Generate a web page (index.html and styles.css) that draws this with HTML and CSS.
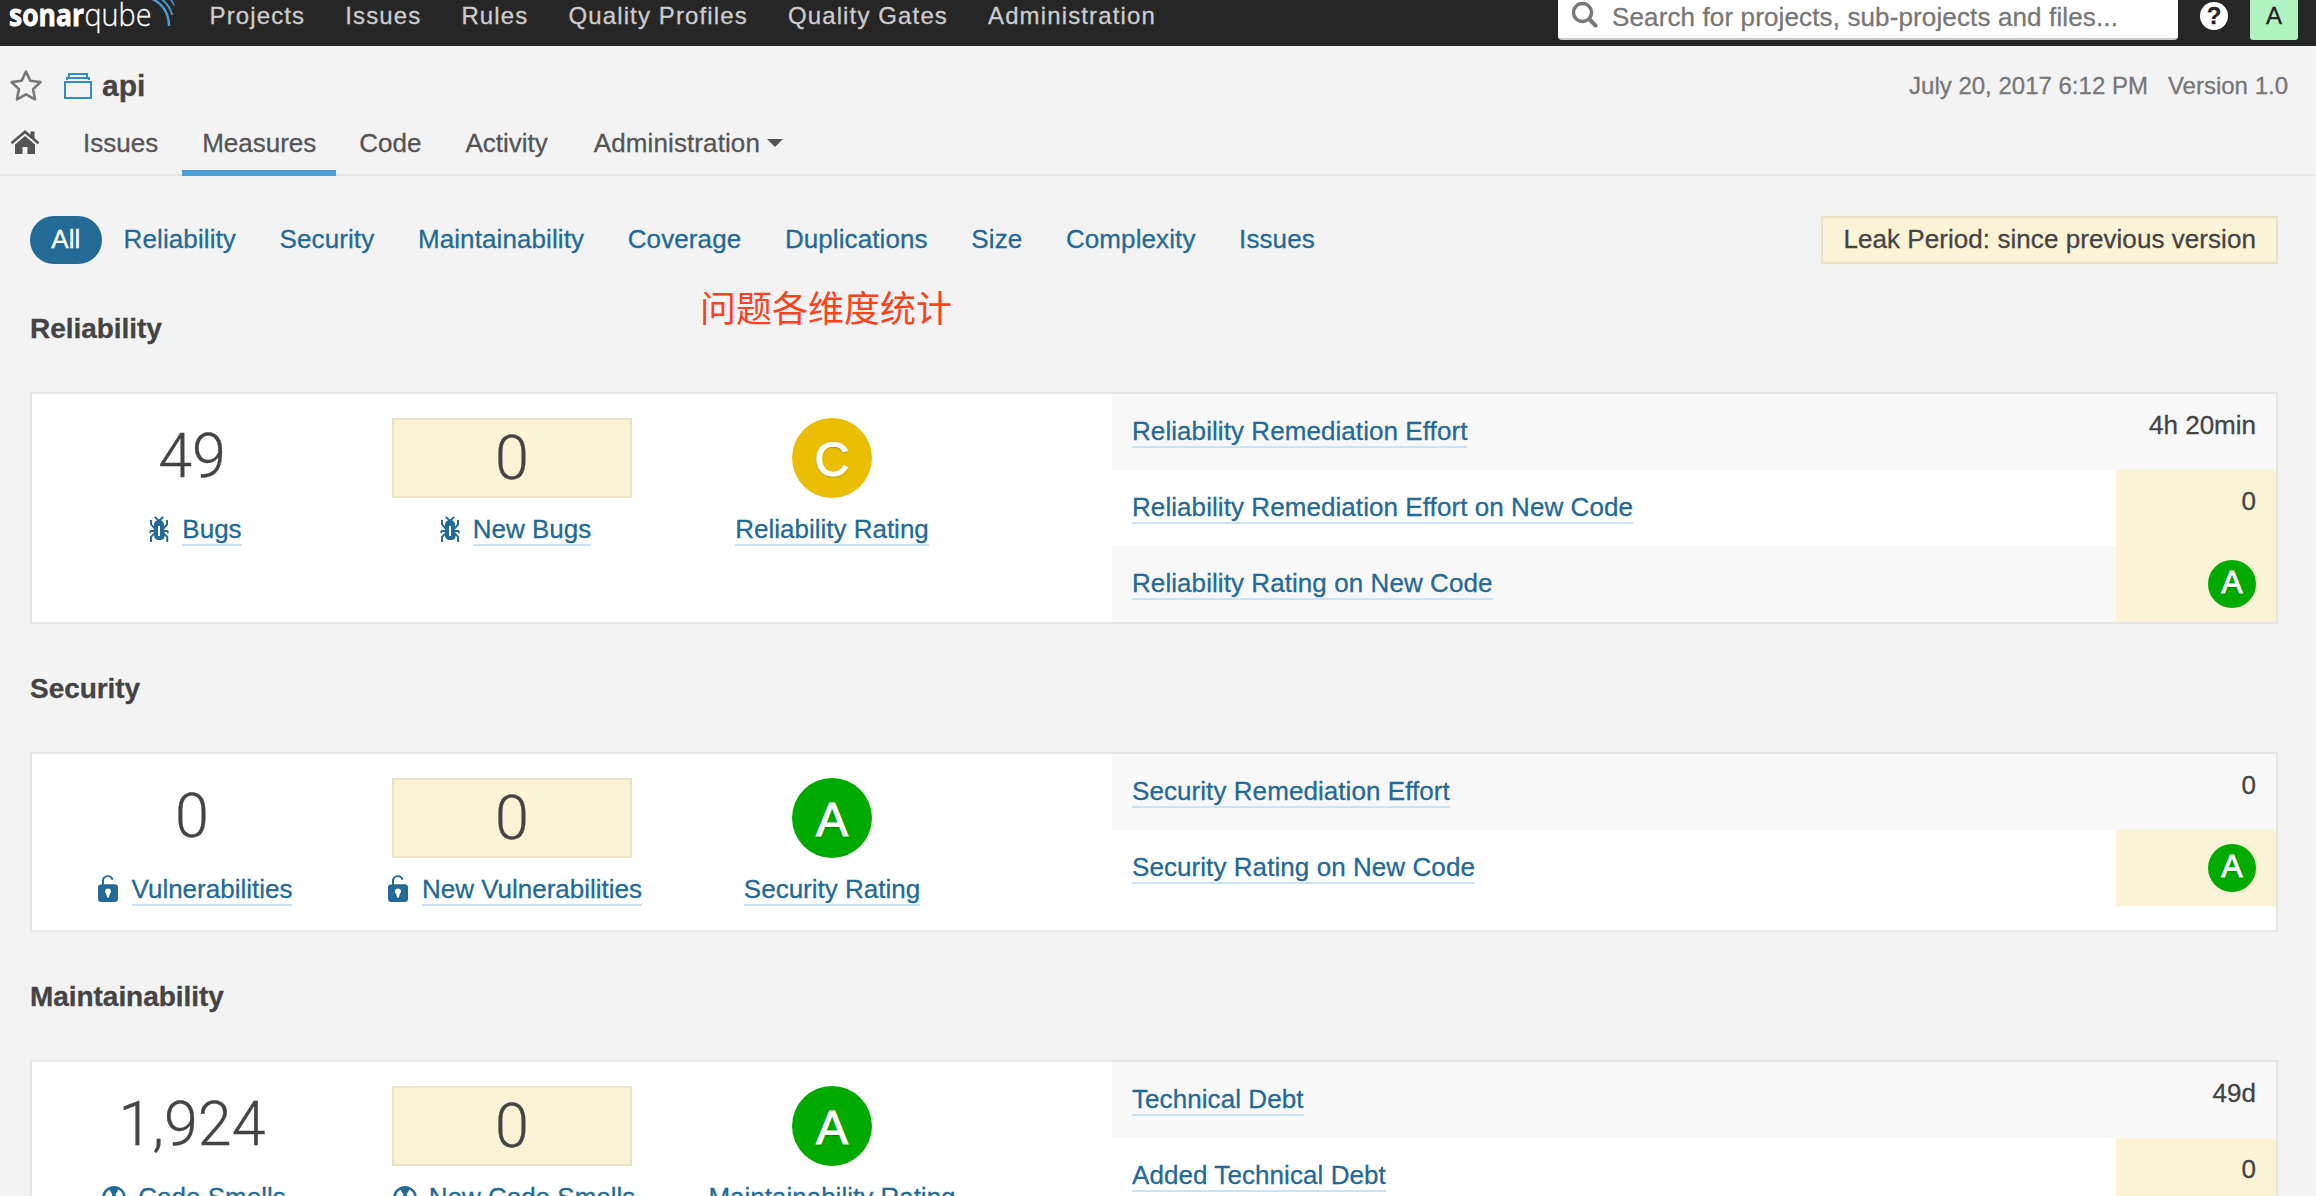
FILE: index.html
```html
<!DOCTYPE html>
<html lang="en">
<head>
<meta charset="utf-8">
<title>api - Measures</title>
<link rel="stylesheet" href="styles.css">
</head>
<body>
<svg class="sprite" width="0" height="0" aria-hidden="true">
  <symbol id="icon-bug" viewBox="0 0 16 16"><path d="M11 9h1.3l.5.8.8-.5-.8-1.3H11v-.3l2-2.3V3h-1v2l-1 1.2V5c-.1-.8-.7-1.5-1.4-1.9L11 1.8l-.7-.7-1.8 1.6-1.8-1.6-.7.7 1.5 1.3C6.7 3.5 6.1 4.2 6 5v1.1L5 5V3H4v2.3l2 2.3V8H4.2l-.7 1.2.8.5.4-.7H6v.3l-2 1.9V14h1v-2.4l1-1C6 12 7.1 13 8.4 13h.8c.7 0 1.4-.3 1.8-.9.3-.4.3-.9.2-1.4l.9.9V14h1v-2.8l-2-1.9V9zm-2 2H8V6h1v5z"/></symbol>
  <symbol id="icon-lock" viewBox="0 0 16 16"><path fill-rule="evenodd" d="M5 5.3V3.4C5 1.8 6.3.6 7.9.6c1.5 0 2.6.9 2.8 2.2l-.9.2c-.2-.9-.9-1.5-1.9-1.5-1.1 0-1.9.8-1.9 1.9v1.700h5.500c.8 0 1.500.6 1.500 1.400v6c0 .9-.7 1.500-1.500 1.500h-7C3.700 14 3 13.400 3 12.500v-6c0-.7.500-1.200 1.200-1.300zM8 7.200c-.9 0-1.500.7-1.500 1.500 0 .5.3.9.6 1.200l.4 1.900h1l.4-1.900c.4-.3.6-.7.6-1.200 0-.8-.6-1.500-1.500-1.500z"/></symbol>
  <symbol id="icon-smell" viewBox="0 0 16 16"><path fill-rule="evenodd" d="M8 2C4.700 2 2 4.700 2 8s2.700 6 6 6 6-2.700 6-6-2.700-6-6-6zm-.5 5.500h1v1h-1zM3.700 7.700c-.1 0-.2-.1-.2-.2 0-1.500.8-2.800 2.100-3.500.2 0 .3 0 .3.100l1.300 2.300c0 .1 0 .2-.1.200-.3.200-.5.600-.5 1 0 .1-.1.200-.2.200zm8.600 0H9.600c-.1 0-.2-.1-.2-.2 0-.4-.2-.8-.5-1-.1 0-.1-.1-.1-.2l1.300-2.300c0-.1.100-.1.300-.1 1.300.7 2.100 2 2.100 3.500 0 .2-.1.300-.2.300zM6 12.100c-.1 0-.1-.2 0-.3l1.300-2.300c.1-.1.100-.1.200-.1.300.2.700.2 1 0 .1 0 .2 0 .2.100l1.300 2.300c.1.100 0 .2 0 .3-1.200.6-2.800.6-4 0z"/></symbol>
</svg>

<header class="navbar">
  <svg class="logo" width="180" height="46" viewBox="0 0 180 46">
    <text class="logo-bold" x="9" y="26" textLength="75" lengthAdjust="spacingAndGlyphs">sonar</text>
    <text class="logo-light" x="84.500" y="26" textLength="67" lengthAdjust="spacingAndGlyphs">qube</text>
    <g fill="none" stroke="#4b9fd5"><path stroke-width="2.400" d="M150-2C161 2 169 12 169 26"/><path stroke-width="1.900" d="M160-2c6 4 10 9 12.300 17"/><path stroke-width="1.500" d="M167-4c3 2 5.500 5 7 9.500"/></g>
  </svg>
  <nav class="global-nav">
    <a>Projects</a><a>Issues</a><a>Rules</a><a>Quality Profiles</a><a>Quality Gates</a><a>Administration</a>
  </nav>
  <div class="search">
    <svg width="28" height="28" viewBox="0 0 28 28"><g fill="none" stroke="#777" stroke-width="3.400"><circle cx="10.500" cy="12.500" r="9"/><path stroke-width="4" stroke-linecap="round" d="M17.500 19.500l6 6"/></g></svg>
    <span>Search for projects, sub-projects and files...</span>
  </div>
  <div class="help"><span>?</span></div>
  <div class="avatar">A</div>
</header>

<header class="context">
  <div class="project">
    <svg width="32" height="32" viewBox="0 0 32 32"><path fill="none" stroke="#777" stroke-width="2.600" stroke-linejoin="round" d="M16 1.500l4.300 9.300 10.200 1.300-7.400 7 1.900 10.200-9-4.900-9 4.900 1.900-10.200-7.400-7 10.200-1.300z"/></svg>
    <svg class="stack" width="28" height="28" viewBox="0 0 28 28"><path fill="none" stroke="#2d8dc9" stroke-width="2" d="M1 9h26v16H1zM3 7V5h22v2M5 4V1h18v3"/></svg>
    <h1>api</h1>
    <div class="meta"><span>July 20, 2017 6:12 PM</span><span>Version 1.0</span></div>
  </div>
  <nav class="tabs">
    <a class="home"><svg width="30" height="26" viewBox="0 0 30 26"><path fill="#555" d="M15 6l10 8.500V24h-7.500v-7h-5v7H5v-9.500zM15 0l5.500 4.700V1.500h4V8l4.800 4.200-1.600 2L15 3.500 2.300 14.200l-1.600-2z"/></svg></a>
    <a>Issues</a><a class="active">Measures</a><a class="code">Code</a><a>Activity</a><a class="admin">Administration<i class="caret"></i></a>
  </nav>
</header>

<main>
  <div class="domains">
    <nav class="pills"><a class="active">All</a><a>Reliability</a><a>Security</a><a>Maintainability</a><a>Coverage</a><a>Duplications</a><a>Size</a><a>Complexity</a><a>Issues</a></nav>
    <div class="leak-period">Leak Period: since previous version</div>
  </div>
  <div class="note" lang="zh">问题各维度统计</div>

  <section>
    <h2>Reliability</h2>
    <div class="card">
      <div class="main-measures">
        <div class="measure"><div class="value">49</div><div class="label"><svg><use href="#icon-bug"/></svg><a>Bugs</a></div></div>
        <div class="measure"><div class="value leak">0</div><div class="label"><svg><use href="#icon-bug"/></svg><a>New Bugs</a></div></div>
        <div class="measure"><div class="rating rating-c">C</div><div class="label"><a>Reliability Rating</a></div></div>
      </div>
      <div class="rows">
        <div class="row"><a>Reliability Remediation Effort</a><div class="cell">4h 20min</div></div>
        <div class="row"><a>Reliability Remediation Effort on New Code</a><div class="cell leak-cell">0</div></div>
        <div class="row"><a>Reliability Rating on New Code</a><div class="cell leak-cell"><span class="rating small">A</span></div></div>
      </div>
    </div>
  </section>

  <section>
    <h2>Security</h2>
    <div class="card">
      <div class="main-measures">
        <div class="measure"><div class="value">0</div><div class="label"><svg><use href="#icon-lock"/></svg><a>Vulnerabilities</a></div></div>
        <div class="measure"><div class="value leak">0</div><div class="label"><svg><use href="#icon-lock"/></svg><a>New Vulnerabilities</a></div></div>
        <div class="measure"><div class="rating">A</div><div class="label"><a>Security Rating</a></div></div>
      </div>
      <div class="rows">
        <div class="row"><a>Security Remediation Effort</a><div class="cell">0</div></div>
        <div class="row"><a>Security Rating on New Code</a><div class="cell leak-cell"><span class="rating small">A</span></div></div>
      </div>
    </div>
  </section>

  <section>
    <h2>Maintainability</h2>
    <div class="card">
      <div class="main-measures">
        <div class="measure"><div class="value">1,924</div><div class="label"><svg><use href="#icon-smell"/></svg><a>Code Smells</a></div></div>
        <div class="measure"><div class="value leak">0</div><div class="label"><svg><use href="#icon-smell"/></svg><a>New Code Smells</a></div></div>
        <div class="measure"><div class="rating">A</div><div class="label"><a>Maintainability Rating</a></div></div>
      </div>
      <div class="rows">
        <div class="row"><a>Technical Debt</a><div class="cell">49d</div></div>
        <div class="row"><a>Added Technical Debt</a><div class="cell leak-cell">0</div></div>
      </div>
    </div>
  </section>
</main>
</body>
</html>
```
FILE: styles.css
```css
* { box-sizing: border-box; }
html, body { height: 100%; overflow: hidden; }
body {
  margin: 0;
  background: #f3f3f3;
  color: #444;
  font: 26px/30px "Liberation Sans", Arial, sans-serif;
  white-space: nowrap;
  -webkit-text-stroke-width: .3px;
}
h1, h2 { margin: 0; }
svg { display: block; flex: none; }
.sprite { position: absolute; }

.navbar {
  display: flex;
  align-items: flex-start;
  height: 46px;
  padding-right: 18px;
  background: #262626;
  color: #ccc;
  font-size: 24px;
  line-height: 32px;
}
.logo { -webkit-text-stroke-width: 0; }
.logo-bold { font: 700 31px "Open Sans", sans-serif; fill: #fff; stroke: #fff; stroke-width: .8px; }
.logo-light { font: 300 31px "Open Sans", sans-serif; fill: #fff; stroke: #fff; stroke-width: .3px; }
.global-nav {
  display: flex;
  gap: 40px;
  margin-left: 29.5px;
  letter-spacing: 1.13px;
}
.search {
  display: flex;
  align-items: flex-start;
  width: 620px;
  height: 40px;
  margin-left: auto;
  padding-left: 14px;
  background: #fff;
  border-bottom: 2px solid #ccc;
  border-radius: 0 0 4px 4px;
  color: #777;
  font-size: 26px;
  line-height: 34px;
  letter-spacing: .13px;
}
.search span { margin-left: 12px; }
.help {
  width: 28px;
  height: 28px;
  margin: 2px 22px 0;
  border-radius: 50%;
  background: #fff;
  color: #262626;
  font-weight: 700;
  line-height: 28px;
  text-align: center;
}
.avatar {
  width: 48px;
  height: 40px;
  border-radius: 0 0 3px 3px;
  background: #b0f2c0;
  color: #222;
  text-align: center;
}

.context {
  height: 130px;
  padding-top: 20px;
  box-shadow: inset 0 -2px #e6e6e6;
}
.project {
  display: flex;
  align-items: center;
  height: 40px;
  padding: 0 28px 0 10px;
}
.stack { margin: 2px 10px 0 22px; }
h1 { font-size: 30px; line-height: 40px; }
.meta {
  display: flex;
  gap: 20px;
  margin-left: auto;
  color: #777;
  font-size: 24px;
}
.tabs {
  display: flex;
  gap: 4px;
  height: 60px;
  margin-top: 10px;
  color: #555;
  line-height: 54px;
}
.tabs a {
  display: flex;
  align-items: center;
  padding: 0 20px;
  border-bottom: 6px solid transparent;
}
.tabs .home { padding: 0 19px 0 10px; }
.tabs .active { border-color: #4b9fd5; }
.tabs .code { padding-left: 19px; }
.tabs .admin { padding-left: 22px; letter-spacing: .1px; }
.caret {
  margin-left: 7px;
  border: 8px solid transparent;
  border-top-color: #555;
  border-bottom: 0;
}

main { padding: 40px 38px 0 30px; }
.domains {
  display: flex;
  justify-content: space-between;
  height: 48px;
  line-height: 46px;
}
.pills { display: flex; color: #236a97; letter-spacing: .1px; }
.pills a { padding: 0 21.8px; }
.pills .active { padding: 0 21.3px; background: #236a97; border-radius: 24px; color: #fff; }
.leak-period {
  padding: 0 20px;
  border: 2px solid #eae3c7;
  background: #fbf3d5;
  line-height: 42px;
  letter-spacing: .06px;
}
.note {
  position: absolute;
  top: 288px;
  left: 700px;
  color: #fa4321;
  font: 36px/36px "Noto Sans CJK SC", sans-serif;
  -webkit-text-stroke-width: 0;
}

section { margin-top: 46px; }
h2 {
  height: 36px;
  margin-bottom: 46px;
  padding-top: 1px;
  font-size: 28px;
  line-height: 36px;
  letter-spacing: -.05px;
}
.card {
  display: flex;
  border: 2px solid #e6e6e6;
  background: #fff;
}
.main-measures { display: flex; width: 1080px; }
.measure {
  display: flex;
  flex-direction: column;
  align-items: center;
  width: 320px;
  padding: 24px 0;
}
.value {
  width: 240px;
  height: 80px;
  font: 300 61px/76px Roboto, sans-serif;
  text-align: center;
}
.leak { border: 2px solid #eae3c7; background: #fbf3d5; }
.label { display: flex; height: 32px; margin-top: 16px; }
.label svg { width: 32px; height: 32px; margin-right: 8px; fill: #236a97; }
.label a, .row a { border-bottom: 2px solid #cae3f2; color: #236a97; line-height: 30px; }
.rating {
  display: block;
  width: 80px;
  height: 80px;
  border-radius: 50%;
  background: #0a0;
  color: #fff;
  font-size: 48px;
  line-height: 83px;
  text-align: center;
  text-shadow: 0 1px 2px rgba(0, 0, 0, .35);
  -webkit-text-stroke-width: 1px;
}
.rating-c { background: #eabe06; }
.rating.small {
  width: 48px;
  height: 48px;
  margin-left: auto;
  font-size: 32px;
  line-height: 45px;
  -webkit-text-stroke-width: .8px;
}
.rows { flex: 1; }
.row {
  display: flex;
  align-items: flex-start;
  justify-content: space-between;
  height: 76px;
  padding-left: 20px;
}
.row:nth-child(odd) { background: #f8f8f8; }
.row a { margin-top: 22px; letter-spacing: .07px; }
.cell { width: 160px; height: 76px; padding: 14px 20px 0 0; line-height: 34px; text-align: right; }
.leak-cell { background: #fbf3d5; }
```
